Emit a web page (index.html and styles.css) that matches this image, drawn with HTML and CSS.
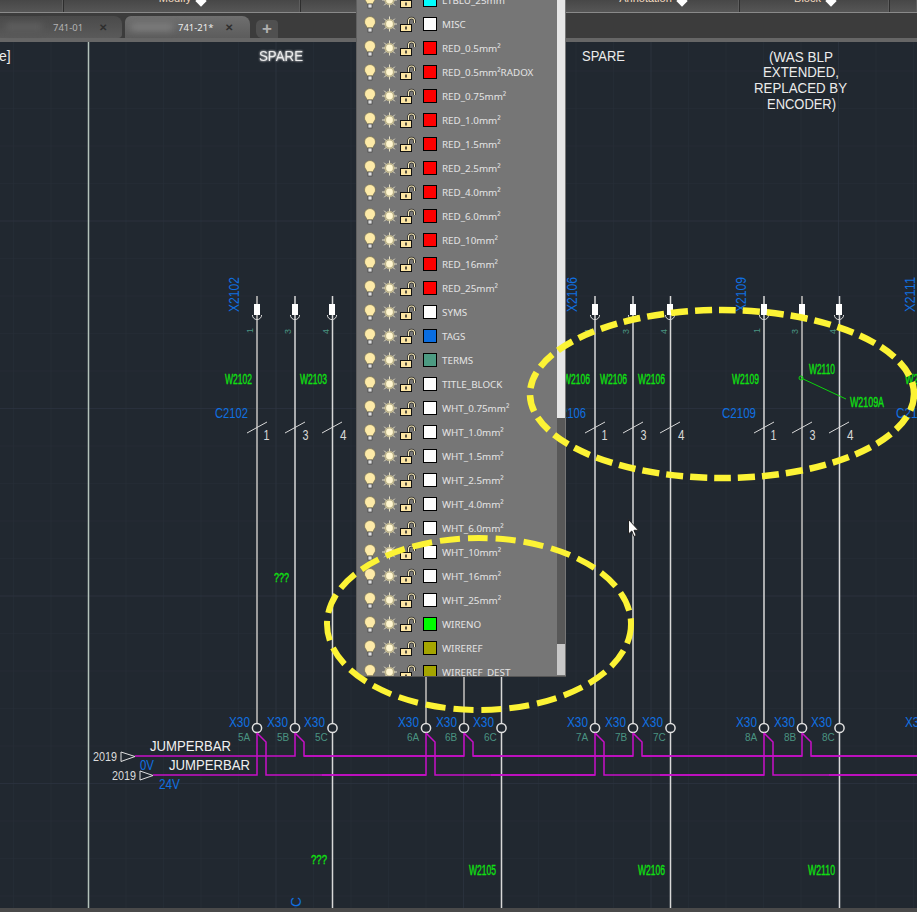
FILE: index.html
```html
<!DOCTYPE html>
<html lang="en">
<head>
<meta charset="utf-8">
<title>741-21 wiring drawing</title>
<link rel="stylesheet" href="styles.css">
</head>
<body>
<div class="app">
  <div class="ribbon">
    <div class="rcell w64"></div>
    <div class="rcell w237"><span class="rlabel">Modify</span><span class="rarrow"></span></div>
    <div class="rcell w265"></div>
    <div class="rcell w174"><span class="rlabel">Annotation</span><span class="rarrow"></span></div>
    <div class="rcell w150"><span class="rlabel">Block</span><span class="rarrow"></span></div>
    <div class="rcell grow"></div>
  </div>
  <div class="tabs">
    <div class="tab first"><span class="smudge dim"></span><span class="tabname">741-01</span><span class="tabx">✕</span></div>
    <div class="tab active"><span class="smudge"></span><span class="tabname">741-21*</span><span class="tabx">✕</span></div>
    <div class="tabadd">+</div>
  </div>
  <div class="stripe"></div>
  <div class="canvas">
    <svg class="drawing" viewBox="0 42 917 866" width="917" height="866">
      <defs>
        <pattern id="minor" patternUnits="userSpaceOnUse" x="13" y="33" width="37.5" height="37.5">
          <path class="grid-minor" d="M0 0V37.5M0 0H37.5"/>
        </pattern>
        <pattern id="major" patternUnits="userSpaceOnUse" x="88" y="33" width="187.5" height="187.5">
          <path class="grid-major" d="M0 0V187.5M0 0H187.5"/>
        </pattern>
        <g id="col">
          <g id="term">
            <rect class="term-body" x="254" y="304" width="6" height="11"/>
            <path class="term-arc" d="M252.400 315a4.600 4.600 0 0 0 9.200 0"/>
          </g>
          <use href="#term" x="38"/>
          <use href="#term" x="75"/>
          <text class="t-teal top" x="253" y="333" transform="rotate(-90 253 333)">1</text>
          <text class="t-teal top" x="291" y="334" transform="rotate(-90 291 334)">3</text>
          <text class="t-teal top" x="329" y="334" transform="rotate(-90 329 334)">4</text>
          <path class="tick" d="M247 433L267 422M285 433L305 422M322 433L342 422"/>
          <text class="t-num" x="263.500" y="440" textLength="6" lengthAdjust="spacingAndGlyphs">1</text>
          <text class="t-num" x="302.500" y="440" textLength="6" lengthAdjust="spacingAndGlyphs">3</text>
          <text class="t-num" x="340" y="440" textLength="6.500" lengthAdjust="spacingAndGlyphs">4</text>
          <circle class="node" cx="257" cy="728" r="4.6"/>
          <circle class="node" cx="295" cy="728" r="4.6"/>
          <circle class="node" cx="332.500" cy="728" r="4.6"/>
          <text class="t-blue" x="229" y="727" textLength="21" lengthAdjust="spacingAndGlyphs">X30</text>
          <text class="t-blue" x="267" y="727" textLength="21" lengthAdjust="spacingAndGlyphs">X30</text>
          <text class="t-blue" x="304" y="727" textLength="21" lengthAdjust="spacingAndGlyphs">X30</text>
          <path class="wire" d="M257 733V775H153M257 733L266 742V775H426"/>
          <path class="wire" d="M295 733V756H135M295 733L304 742V756H464"/>
        </g>
      </defs>
      <rect x="0" y="42" width="917" height="866" fill="url(#minor)"/>
      <rect x="0" y="42" width="917" height="866" fill="url(#major)"/>

      <path class="line-main" d="M88.500 42V908"/>

      <text class="t-label blur" x="259" y="61" textLength="44" lengthAdjust="spacingAndGlyphs">SPARE</text>
      <text class="t-label" x="-1" y="61">e]</text>
      <text class="t-label" x="582" y="61" textLength="43" lengthAdjust="spacingAndGlyphs">SPARE</text>
      <text class="t-label" x="769" y="62" textLength="64" lengthAdjust="spacingAndGlyphs">(WAS BLP</text>
      <text class="t-label" x="763" y="77" textLength="76" lengthAdjust="spacingAndGlyphs">EXTENDED,</text>
      <text class="t-label" x="754" y="93" textLength="93" lengthAdjust="spacingAndGlyphs">REPLACED BY</text>
      <text class="t-label" x="767" y="109" textLength="69" lengthAdjust="spacingAndGlyphs">ENCODER)</text>

      <path class="line-gray" d="M257 296V723"/>
      <path class="line" d="M295 296V723M332.500 296V908"/>
      <path class="line-gray" d="M426 296V723M464 296V723"/>
      <path class="line" d="M501.500 296V908"/>
      <path class="line" d="M595 296V723M633 296V723M670.500 296V908"/>
      <path class="line" d="M764 296V723"/>
      <path class="line-gray" d="M802 296V723"/>
      <path class="line" d="M839.500 296V908"/>

      <use href="#col"/>
      <use href="#col" x="169"/>
      <use href="#col" x="338"/>
      <use href="#col" x="507"/>
      <use href="#col" x="676"/>

      <text class="t-blue" x="239" y="312" textLength="35" lengthAdjust="spacingAndGlyphs" transform="rotate(-90 239 312)">X2102</text>
      <text class="t-blue" x="577" y="312" textLength="35" lengthAdjust="spacingAndGlyphs" transform="rotate(-90 577 312)">X2106</text>
      <text class="t-blue" x="746" y="312" textLength="35" lengthAdjust="spacingAndGlyphs" transform="rotate(-90 746 312)">X2109</text>
      <text class="t-blue" x="915" y="312" textLength="35" lengthAdjust="spacingAndGlyphs" transform="rotate(-90 915 312)">X2111</text>

      <text class="t-blue" x="215" y="418" textLength="33" lengthAdjust="spacingAndGlyphs">C2102</text>
      <text class="t-blue" x="553" y="418" textLength="33" lengthAdjust="spacingAndGlyphs">C2106</text>
      <text class="t-blue" x="722" y="418" textLength="34" lengthAdjust="spacingAndGlyphs">C2109</text>
      <text class="t-blue" x="896" y="418" textLength="33" lengthAdjust="spacingAndGlyphs">C2111</text>

      <text class="t-green" x="225" y="384" textLength="27" lengthAdjust="spacingAndGlyphs">W2102</text>
      <text class="t-green" x="300" y="384" textLength="27" lengthAdjust="spacingAndGlyphs">W2103</text>
      <text class="t-green" x="563" y="384" textLength="27" lengthAdjust="spacingAndGlyphs">W2106</text>
      <text class="t-green" x="600" y="384" textLength="27" lengthAdjust="spacingAndGlyphs">W2106</text>
      <text class="t-green" x="638" y="384" textLength="27" lengthAdjust="spacingAndGlyphs">W2106</text>
      <text class="t-green" x="732" y="384" textLength="27" lengthAdjust="spacingAndGlyphs">W2109</text>
      <text class="t-green" x="809" y="374" textLength="26" lengthAdjust="spacingAndGlyphs">W2110</text>
      <text class="t-green" x="850" y="407" textLength="34" lengthAdjust="spacingAndGlyphs">W2109A</text>
      <text class="t-green" x="905" y="384" textLength="27" lengthAdjust="spacingAndGlyphs">W2111</text>
      <path class="leader" d="M801 378L846 399"/>
      <circle class="leader" cx="801" cy="378" r="2"/>

      <text class="t-teal" x="238" y="741">5A</text>
      <text class="t-teal" x="277" y="741">5B</text>
      <text class="t-teal" x="315" y="741">5C</text>
      <text class="t-teal" x="407" y="741">6A</text>
      <text class="t-teal" x="445" y="741">6B</text>
      <text class="t-teal" x="484" y="741">6C</text>
      <text class="t-teal" x="576" y="741">7A</text>
      <text class="t-teal" x="615" y="741">7B</text>
      <text class="t-teal" x="653" y="741">7C</text>
      <text class="t-teal" x="745" y="741">8A</text>
      <text class="t-teal" x="784" y="741">8B</text>
      <text class="t-teal" x="822" y="741">8C</text>

      <path class="flag" d="M121 752L135 756.500L121 761.500Z"/>
      <path class="flag" d="M140 771L153 775.500L140 780Z"/>
      <text class="t-flag" x="93" y="761" textLength="24" lengthAdjust="spacingAndGlyphs">2019</text>
      <text class="t-flag" x="112" y="780" textLength="24" lengthAdjust="spacingAndGlyphs">2019</text>
      <text class="t-jump" x="150" y="751" textLength="81" lengthAdjust="spacingAndGlyphs">JUMPERBAR</text>
      <text class="t-jump" x="169" y="770" textLength="81" lengthAdjust="spacingAndGlyphs">JUMPERBAR</text>
      <text class="t-blue" x="140" y="770" textLength="14" lengthAdjust="spacingAndGlyphs">0V</text>
      <text class="t-blue" x="159" y="789" textLength="21" lengthAdjust="spacingAndGlyphs">24V</text>

      <text class="t-green small" x="274" y="582" textLength="15" lengthAdjust="spacingAndGlyphs">???</text>
      <text class="t-green small" x="311" y="864" textLength="16" lengthAdjust="spacingAndGlyphs">???</text>
      <text class="t-green" x="469" y="875" textLength="27" lengthAdjust="spacingAndGlyphs">W2105</text>
      <text class="t-green" x="638" y="875" textLength="27" lengthAdjust="spacingAndGlyphs">W2106</text>
      <text class="t-green" x="808" y="875" textLength="27" lengthAdjust="spacingAndGlyphs">W2110</text>
      <text class="t-blue" x="301" y="917" textLength="20" lengthAdjust="spacingAndGlyphs" transform="rotate(-90 301 917)">DC</text>
    </svg>
  </div>
  <div class="status"></div>

  <div class="layers">
    <svg class="sprite" width="0" height="0">
      <defs>
        <g id="ri">
          <path class="bulb" d="M8 4.500c3 0 5.500 2.300 5.500 5.500 0 2.500-2 3.500-2.700 6H5.200c-.7-2.500-2.700-3.500-2.700-6 0-3.200 2.500-5.500 5.500-5.500z"/>
          <rect class="bulb-base" x="6" y="16" width="4" height="4"/>
          <circle class="halo" cx="27.500" cy="12" r="5.200"/>
          <circle class="sun" cx="27.500" cy="12" r="3.400"/>
          <path class="rays" d="M27.500 4.500v3M27.500 16.500v3M20 12h3M32 12h3M22.200 6.700l2 2M30.800 15.300l2 2M32.800 6.700l-2 2M24.200 15.300l-2 2"/>
          <path class="shackle-out" d="M46.500 12V9a3 3 0 0 1 6 0v2"/>
          <path class="shackle" d="M46.500 12V9a3 3 0 0 1 6 0v2"/>
          <rect class="lock" x="38.500" y="12.500" width="11" height="7"/>
          <path class="keyhole" d="M44 14.500v3"/>
        </g>
      </defs>
    </svg>
    <ul class="layer-list">
      <li class="row"><svg class="ri"><use href="#ri"/></svg><span class="swatch cyan"></span><span class="name">LTBLU_25mm²</span></li>
      <li class="row"><svg class="ri"><use href="#ri"/></svg><span class="swatch white"></span><span class="name">MISC</span></li>
      <li class="row"><svg class="ri"><use href="#ri"/></svg><span class="swatch red"></span><span class="name">RED_0.5mm²</span></li>
      <li class="row"><svg class="ri"><use href="#ri"/></svg><span class="swatch red"></span><span class="name">RED_0.5mm²RADOX</span></li>
      <li class="row"><svg class="ri"><use href="#ri"/></svg><span class="swatch red"></span><span class="name">RED_0.75mm²</span></li>
      <li class="row"><svg class="ri"><use href="#ri"/></svg><span class="swatch red"></span><span class="name">RED_1.0mm²</span></li>
      <li class="row"><svg class="ri"><use href="#ri"/></svg><span class="swatch red"></span><span class="name">RED_1.5mm²</span></li>
      <li class="row"><svg class="ri"><use href="#ri"/></svg><span class="swatch red"></span><span class="name">RED_2.5mm²</span></li>
      <li class="row"><svg class="ri"><use href="#ri"/></svg><span class="swatch red"></span><span class="name">RED_4.0mm²</span></li>
      <li class="row"><svg class="ri"><use href="#ri"/></svg><span class="swatch red"></span><span class="name">RED_6.0mm²</span></li>
      <li class="row"><svg class="ri"><use href="#ri"/></svg><span class="swatch red"></span><span class="name">RED_10mm²</span></li>
      <li class="row"><svg class="ri"><use href="#ri"/></svg><span class="swatch red"></span><span class="name">RED_16mm²</span></li>
      <li class="row"><svg class="ri"><use href="#ri"/></svg><span class="swatch red"></span><span class="name">RED_25mm²</span></li>
      <li class="row"><svg class="ri"><use href="#ri"/></svg><span class="swatch white"></span><span class="name">SYMS</span></li>
      <li class="row"><svg class="ri"><use href="#ri"/></svg><span class="swatch blue"></span><span class="name">TAGS</span></li>
      <li class="row"><svg class="ri"><use href="#ri"/></svg><span class="swatch teal"></span><span class="name">TERMS</span></li>
      <li class="row"><svg class="ri"><use href="#ri"/></svg><span class="swatch white"></span><span class="name">TITLE_BLOCK</span></li>
      <li class="row"><svg class="ri"><use href="#ri"/></svg><span class="swatch white"></span><span class="name">WHT_0.75mm²</span></li>
      <li class="row"><svg class="ri"><use href="#ri"/></svg><span class="swatch white"></span><span class="name">WHT_1.0mm²</span></li>
      <li class="row"><svg class="ri"><use href="#ri"/></svg><span class="swatch white"></span><span class="name">WHT_1.5mm²</span></li>
      <li class="row"><svg class="ri"><use href="#ri"/></svg><span class="swatch white"></span><span class="name">WHT_2.5mm²</span></li>
      <li class="row"><svg class="ri"><use href="#ri"/></svg><span class="swatch white"></span><span class="name">WHT_4.0mm²</span></li>
      <li class="row"><svg class="ri"><use href="#ri"/></svg><span class="swatch white"></span><span class="name">WHT_6.0mm²</span></li>
      <li class="row"><svg class="ri"><use href="#ri"/></svg><span class="swatch white"></span><span class="name">WHT_10mm²</span></li>
      <li class="row"><svg class="ri"><use href="#ri"/></svg><span class="swatch white"></span><span class="name">WHT_16mm²</span></li>
      <li class="row"><svg class="ri"><use href="#ri"/></svg><span class="swatch white"></span><span class="name">WHT_25mm²</span></li>
      <li class="row"><svg class="ri"><use href="#ri"/></svg><span class="swatch green"></span><span class="name">WIRENO</span></li>
      <li class="row"><svg class="ri"><use href="#ri"/></svg><span class="swatch olive"></span><span class="name">WIREREF</span></li>
      <li class="row"><svg class="ri"><use href="#ri"/></svg><span class="swatch olive"></span><span class="name">WIREREF_DEST</span></li>
    </ul>
    <div class="scrollbar">
      <div class="sb-top"></div>
      <div class="sb-thumb"></div>
      <div class="sb-end"></div>
    </div>
  </div>

  <svg class="markup" viewBox="0 0 917 912" width="917" height="912">
    <ellipse class="mark-a" cx="722" cy="394" rx="192" ry="84"/>
    <ellipse class="mark-b" cx="479" cy="624" rx="152" ry="86"/>
    <path class="cursor" d="M628.500 519.500V534L631.800 531L634 536.500L636.200 535.500L634 530.300H638.500Z"/>
  </svg>
</div>
</body>
</html>
```
FILE: styles.css
```css
* { box-sizing: border-box; }
html, body { margin: 0; padding: 0; background: #212830; }
body { width: 917px; height: 912px; overflow: hidden; font-family: "Liberation Sans", Arial, sans-serif; }
.app { position: relative; width: 917px; height: 912px; display: flex; flex-direction: column; overflow: hidden; }

/* ribbon */
.ribbon { display: flex; height: 13px; flex: none; background: #4a4a4a; border-bottom: 1px solid #8a8a8a; }
.rcell { display: flex; justify-content: center; align-items: flex-start; gap: 6px; height: 12px; overflow: hidden; border-right: 1px solid #2e2e2e; box-shadow: inset -1px 0 0 #5e5e5e; background: linear-gradient(#474747, #565656); }
.w64 { width: 64px; } .w237 { width: 237px; } .w265 { width: 265px; } .w174 { width: 174px; } .w150 { width: 150px; }
.grow { flex: 1; border-right: 0; }
.rlabel { font-size: 11px; line-height: 14px; margin-top: -9px; color: #f6dcc0; }
.rarrow { width: 8px; height: 8px; margin-top: -3px; background: #fff; transform: rotate(45deg); flex: none; }

/* tabs */
.tabs { display: flex; align-items: flex-end; height: 25px; flex: none; background: #3c3c3c; }
.tab { display: flex; align-items: center; height: 22px; border-radius: 6px 8px 0 0; position: relative; }
.tab.first { width: 122px; background: linear-gradient(#4a4a4a, #5a5a5a); margin-right: 3px; padding-left: 53px; border-radius: 0 8px 4px 0; }
.tab.active { width: 125px; background: linear-gradient(#6f6f6f, #5c5c5c); padding-left: 53px; }
.tabname { font-family: "Noto Sans", sans-serif; font-size: 9.500px; color: #c0c0c0; width: 40px; white-space: nowrap; }
.tab.first .tabname { width: 46px; color: #b4b4b4; }
.tab.active .tabname { width: 47px; color: #ececec; }
.tabx { font-size: 10px; font-weight: bold; color: #2e2e2e; }
.smudge { position: absolute; left: 6px; top: 7px; width: 42px; height: 8px; background: #7c7c7c; filter: blur(3px); }
.smudge.dim { left: 6px; width: 36px; background: #5e5e5e; }
.tabadd { width: 22px; height: 18px; margin-left: 6px; background: #505050; border-radius: 5px 4px 0 6px; color: #b0b0b0; font-size: 17px; font-weight: bold; line-height: 18px; text-align: center; }
.stripe { height: 4px; flex: none; background: #666; }

/* canvas */
.canvas { flex: 1; background: #212830; min-height: 0; }
.drawing { display: block; }
.status { height: 4px; flex: none; background: #4a4a4a; }

.grid-minor { fill: none; stroke: #272e38; stroke-width: 1; }
.grid-major { fill: none; stroke: #2e3643; stroke-width: 1; }
.line-main { fill: none; stroke: #b4c2ba; stroke-width: 1.500; }
.line { fill: none; stroke: #d8d8d8; stroke-width: 1.500; }
.line-gray { fill: none; stroke: #9c9c9c; stroke-width: 2; }
.term-body { fill: #fff; }
.term-arc { fill: none; stroke: #d8d8d8; stroke-width: 1; }
.tick { fill: none; stroke: #d8d8d8; stroke-width: 1; }
.node { fill: #212830; stroke: #e0e0e0; stroke-width: 1.500; }
.wire { fill: none; stroke: #c80fc8; stroke-width: 1.500; }
.flag { fill: none; stroke: #e0e0e0; stroke-width: 1; }
.leader { fill: none; stroke: #0cd40c; stroke-width: 1; }

text { font-family: "Liberation Sans", Arial, sans-serif; }
.t-blue { font-size: 14px; fill: #1070e0; }
.t-green { font-size: 14px; fill: #10e010; stroke: #10e010; stroke-width: .35; }
.t-green.small { font-size: 12px; }
.t-teal { font-size: 10px; fill: #4a9482; }
.t-teal.top { font-size: 9px; }
.t-num { font-size: 14px; fill: #d8d8d8; }
.t-flag { font-size: 13px; fill: #dcdcdc; }
.t-jump { font-size: 14px; fill: #f0f0f0; }
.t-label { font-size: 14px; fill: #ececec; }
.blur { filter: drop-shadow(0 0 1px #fff); }

/* layer dropdown */
.layers { position: absolute; left: 356px; top: 0; width: 210px; height: 677px; display: flex; background: #767676; border-left: 1px solid #606060; border-bottom: 1px solid #555; overflow: hidden; }
.sprite { position: absolute; }
.layer-list { list-style: none; margin: -12px 0 0; padding: 0; width: 200px; flex: none; }
.row { display: flex; align-items: center; height: 24px; padding-left: 5px; }
.ri { width: 61px; height: 24px; flex: none; }
.bulb { fill: #fdeaa8; stroke: #6e6a52; stroke-width: .7; }
.bulb-base { fill: #e0e0e0; stroke: #444; stroke-width: .7; }
.halo { fill: #e8d898; opacity: .6; }
.sun { fill: #fff6d0; }
.rays { fill: none; stroke: #f2ecd2; stroke-width: .9; }
.lock { fill: #fde6a4; stroke: #111; stroke-width: 1; }
.shackle-out { fill: none; stroke: #222; stroke-width: 2.600; }
.shackle { fill: none; stroke: #fbeebd; stroke-width: 1.100; }
.keyhole { fill: none; stroke: #222; stroke-width: 1.500; }
.swatch { width: 14px; height: 14px; border: 1px solid #000; flex: none; }
.cyan { background: #00ffff; } .white { background: #fff; } .red { background: #f00; }
.blue { background: #0a6de0; } .teal { background: #4c9a82; } .green { background: #0f0; } .olive { background: #a5a500; }
.name { margin-left: 5px; font-family: "Noto Sans", sans-serif; font-size: 9.800px; color: #e4e4e4; white-space: nowrap; }
.scrollbar { width: 8px; flex: none; display: flex; flex-direction: column; margin-bottom: 1px; }
.sb-top { height: 418px; background: #e6e6e6; }
.sb-thumb { height: 226px; background: #585858; }
.sb-end { flex: 1; background: #c8c8c8; }

/* markup over the screenshot */
.markup { position: absolute; left: 0; top: 0; }
.mark-a { fill: none; stroke: #fcf335; stroke-width: 6.500; stroke-dasharray: 17 7; }
.mark-b { fill: none; stroke: #fcf335; stroke-width: 6; stroke-dasharray: 20 8; }
.cursor { fill: #fff; stroke: #222; stroke-width: 1; }
```
